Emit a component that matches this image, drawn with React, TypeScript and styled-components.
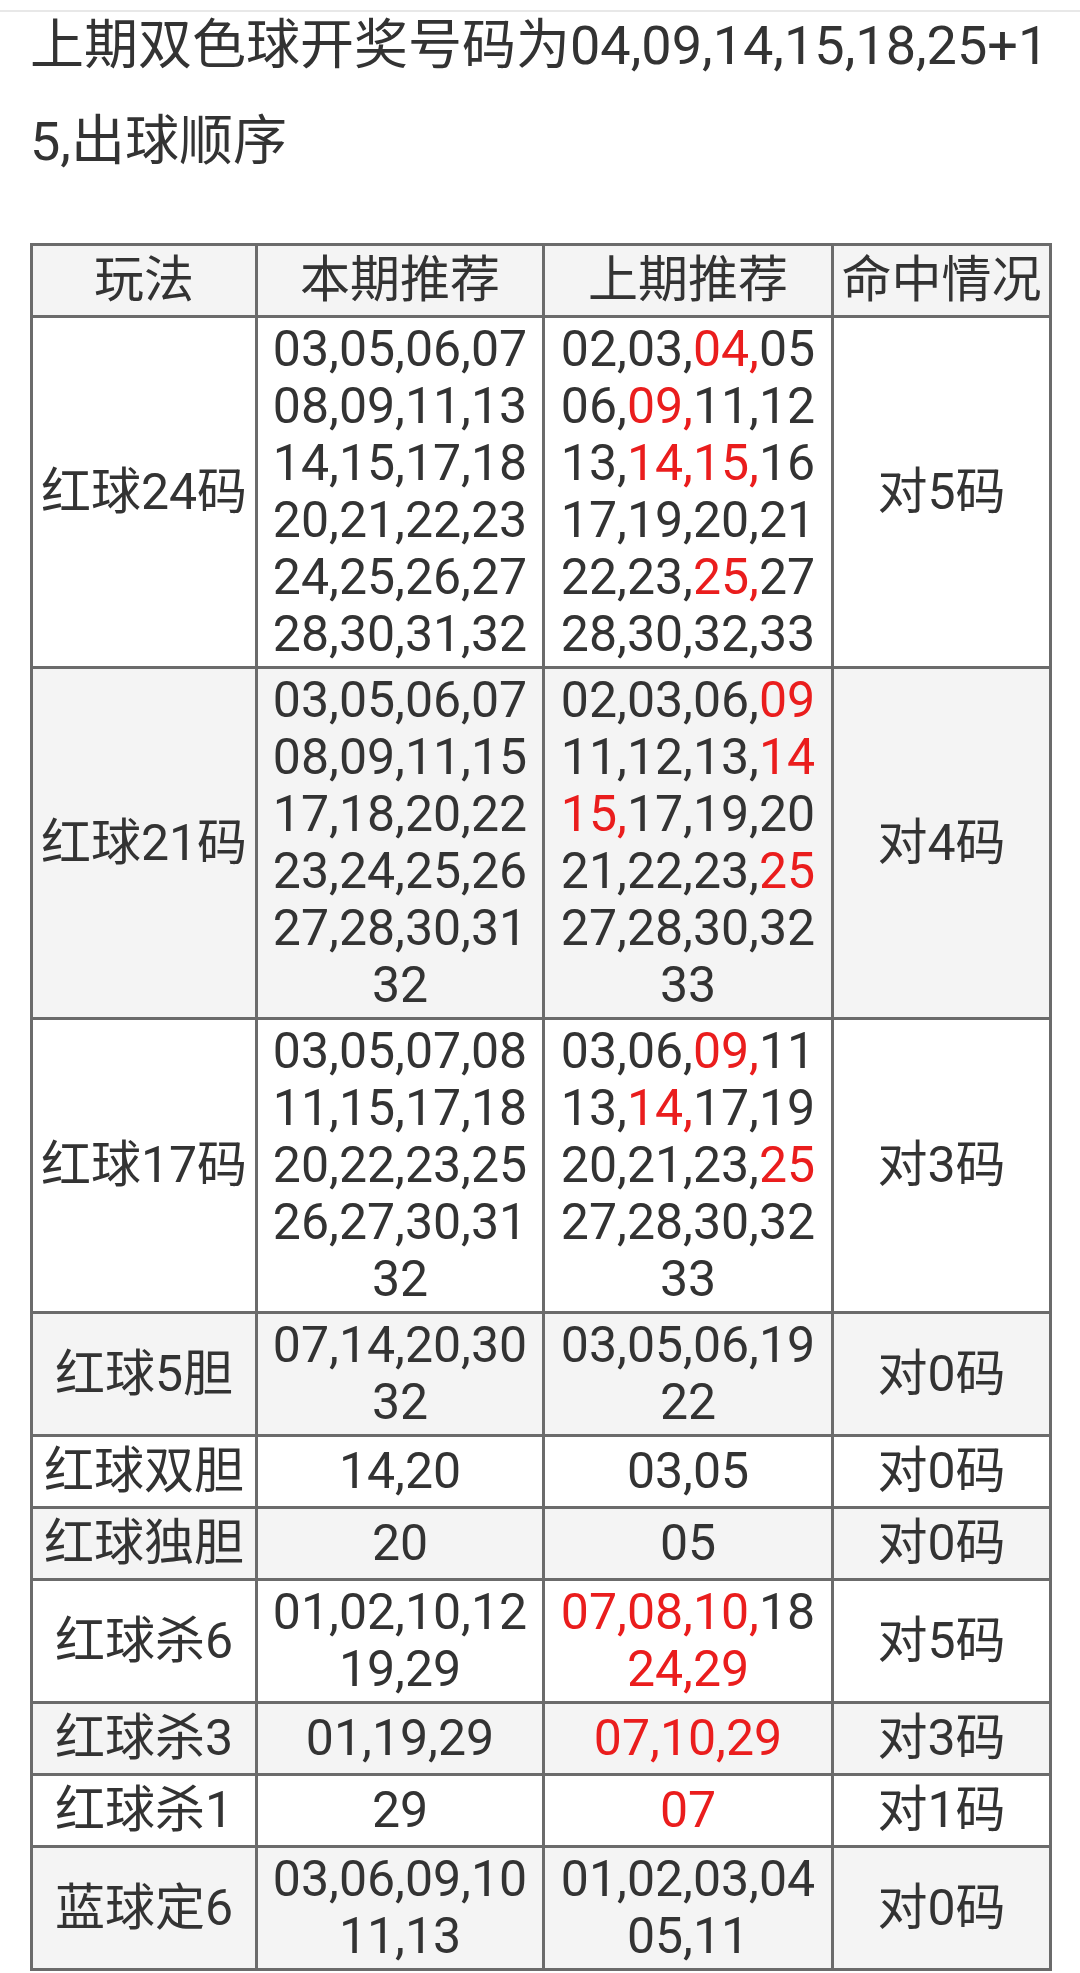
import React from 'react';
import styled, { createGlobalStyle } from 'styled-components';

const TEXT = '#333333';
const LINE = '#6b6b6b';
const STRIPE = '#f4f4f4';
const HIT = '#ea1d1d';

const GlobalStyle = createGlobalStyle`
  html, body {
    margin: 0;
    padding: 0;
    background: #fff;
  }
  body {
    font-family: Roboto, 'Noto Sans CJK SC', sans-serif;
    color: ${TEXT};
  }
`;

const Page = styled.div`
  position: relative;
  padding: 0 30px;
  overflow: hidden;
  height: 1973px;
`;

const TopEdge = styled.div`
  position: absolute;
  top: 10px;
  left: 0;
  right: 0;
  height: 2px;
  background: #e8e8e8;
`;

const Title = styled.p`
  margin: -2px 0 53px;
  font-size: 54px;
  line-height: 96px;
  word-break: break-all;
`;

const Table = styled.table`
  width: 1019px;
  border-collapse: collapse;
  table-layout: fixed;
  font-size: 50px;
  text-align: center;
`;

const Col = styled.col<{ $w: number }>`
  width: ${(p) => p.$w}px;
`;

const Row = styled.tr<{ $striped?: boolean }>`
  background: ${(p) => (p.$striped ? STRIPE : '#fff')};
`;

const HeadCell = styled.th`
  border: 3px solid ${LINE};
  padding: 3px 0;
  font-weight: normal;
  line-height: 63px;
  background: ${STRIPE};
  white-space: nowrap;
`;

const LabelCell = styled.td`
  border: 3px solid ${LINE};
  padding: 3px 0;
  line-height: 63px;
  vertical-align: middle;
  white-space: nowrap;
`;

const NumCell = styled.td`
  border: 3px solid ${LINE};
  padding: 3px 0;
  line-height: 57px;
  vertical-align: middle;
  white-space: nowrap;
`;

const NumLine = styled.div``;

const Num = styled.span<{ $hit?: boolean }>`
  color: ${(p) => (p.$hit ? HIT : TEXT)};
`;

type Line = string[];

interface Play {
  name: string;
  now: Line[];
  last: Line[];
  result: string;
}

// "*" marks a number that came out in the last draw
const plays: Play[] = [
  {
    name: '红球24码',
    now: [
      ['03', '05', '06', '07'],
      ['08', '09', '11', '13'],
      ['14', '15', '17', '18'],
      ['20', '21', '22', '23'],
      ['24', '25', '26', '27'],
      ['28', '30', '31', '32'],
    ],
    last: [
      ['02', '03', '*04', '05'],
      ['06', '*09', '11', '12'],
      ['13', '*14', '*15', '16'],
      ['17', '19', '20', '21'],
      ['22', '23', '*25', '27'],
      ['28', '30', '32', '33'],
    ],
    result: '对5码',
  },
  {
    name: '红球21码',
    now: [
      ['03', '05', '06', '07'],
      ['08', '09', '11', '15'],
      ['17', '18', '20', '22'],
      ['23', '24', '25', '26'],
      ['27', '28', '30', '31'],
      ['32'],
    ],
    last: [
      ['02', '03', '06', '*09'],
      ['11', '12', '13', '*14'],
      ['*15', '17', '19', '20'],
      ['21', '22', '23', '*25'],
      ['27', '28', '30', '32'],
      ['33'],
    ],
    result: '对4码',
  },
  {
    name: '红球17码',
    now: [
      ['03', '05', '07', '08'],
      ['11', '15', '17', '18'],
      ['20', '22', '23', '25'],
      ['26', '27', '30', '31'],
      ['32'],
    ],
    last: [
      ['03', '06', '*09', '11'],
      ['13', '*14', '17', '19'],
      ['20', '21', '23', '*25'],
      ['27', '28', '30', '32'],
      ['33'],
    ],
    result: '对3码',
  },
  {
    name: '红球5胆',
    now: [['07', '14', '20', '30'], ['32']],
    last: [['03', '05', '06', '19'], ['22']],
    result: '对0码',
  },
  { name: '红球双胆', now: [['14', '20']], last: [['03', '05']], result: '对0码' },
  { name: '红球独胆', now: [['20']], last: [['05']], result: '对0码' },
  {
    name: '红球杀6',
    now: [['01', '02', '10', '12'], ['19', '29']],
    last: [['*07', '*08', '*10', '18'], ['*24', '*29']],
    result: '对5码',
  },
  { name: '红球杀3', now: [['01', '19', '29']], last: [['*07', '*10', '*29']], result: '对3码' },
  { name: '红球杀1', now: [['29']], last: [['*07']], result: '对1码' },
  {
    name: '蓝球定6',
    now: [['03', '06', '09', '10'], ['11', '13']],
    last: [['01', '02', '03', '04'], ['05', '11']],
    result: '对0码',
  },
];

const Numbers = ({ lines }: { lines: Line[] }) => (
  <NumCell>
    {lines.map((line, i) => (
      <NumLine key={i}>
        {line.map((n, j) => {
          const hit = n.startsWith('*');
          const text = (hit ? n.slice(1) : n) + (j < line.length - 1 ? ',' : '');
          return (
            <Num key={j} $hit={hit}>
              {text}
            </Num>
          );
        })}
      </NumLine>
    ))}
  </NumCell>
);

const App = () => {
  return (
    <Page>
      <GlobalStyle />
      <TopEdge />
      <Title>上期双色球开奖号码为04,09,14,15,18,25+15,出球顺序</Title>
      <Table>
        <colgroup>
          <Col $w={225} />
          <Col $w={287} />
          <Col $w={289} />
          <Col $w={218} />
        </colgroup>
        <thead>
          <tr>
            <HeadCell>玩法</HeadCell>
            <HeadCell>本期推荐</HeadCell>
            <HeadCell>上期推荐</HeadCell>
            <HeadCell>命中情况</HeadCell>
          </tr>
        </thead>
        <tbody>
          {plays.map((p, i) => (
            <Row key={p.name} $striped={i % 2 === 1}>
              <LabelCell>{p.name}</LabelCell>
              <Numbers lines={p.now} />
              <Numbers lines={p.last} />
              <LabelCell>{p.result}</LabelCell>
            </Row>
          ))}
        </tbody>
      </Table>
    </Page>
  );
};

export default App;
